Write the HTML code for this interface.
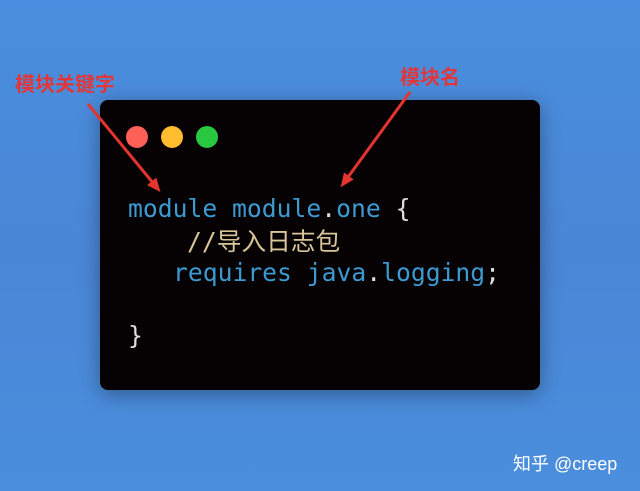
<!DOCTYPE html>
<html><head><meta charset="utf-8"><style>
html,body{margin:0;padding:0;}
body{width:640px;height:491px;position:relative;overflow:hidden;
background:linear-gradient(180deg,#4a8fdf 0%,#4a86d6 50%,#4a8edd 100%);
font-family:"Liberation Sans","Noto Sans CJK SC",sans-serif;}
.card{position:absolute;left:100px;top:100px;width:440px;height:290px;background:#060203;border-radius:8px;box-shadow:0 4px 20px rgba(0,0,0,0.35);}
.dot{position:absolute;top:126px;width:22px;height:22px;border-radius:50%;}
.code{position:absolute;left:128px;font-family:"DejaVu Sans Mono","Noto Sans CJK SC",monospace;font-size:24.7px;white-space:pre;color:#3c9ad0;line-height:1;}
.lbl{position:absolute;color:#e0373a;font-size:20px;font-weight:bold;font-family:"Liberation Sans","Noto Sans CJK SC",sans-serif;}
</style></head><body>
<div class="card"></div>
<div class="dot" style="left:126px;background:#fe5f57"></div>
<div class="dot" style="left:161px;background:#febc2e"></div>
<div class="dot" style="left:196px;background:#28c840"></div>
<div class="code" style="top:197px">module module<span style="color:#ddd">.</span>one <span style="color:#ddd">{</span></div>
<div class="code" style="top:230px;left:187px;color:#d8c59a">//导入日志包</div>
<div class="code" style="top:261px;left:173px">requires java<span style="color:#ddd">.</span>logging<span style="color:#ddd">;</span></div>
<div class="code" style="top:324px;color:#ddd">}</div>
<div class="lbl" style="left:15px;top:68px">模块关键字</div>
<div class="lbl" style="left:400px;top:61px">模块名</div>
<svg width="640" height="491" style="position:absolute;left:0;top:0">
<defs><marker id="a" markerWidth="14" markerHeight="12" refX="10" refY="6" orient="auto" markerUnits="userSpaceOnUse"><path d="M0,0 L14,6 L0,12 z" fill="#e3342f"/></marker></defs>
<line x1="88" y1="104" x2="158" y2="189" stroke="#e3342f" stroke-width="3" marker-end="url(#a)"/>
<line x1="410" y1="92" x2="343" y2="184" stroke="#e3342f" stroke-width="3" marker-end="url(#a)"/>
</svg>
<div style="position:absolute;left:513px;top:450px;color:#fff;font-size:18px;">知乎 @creep</div>
</body></html>
